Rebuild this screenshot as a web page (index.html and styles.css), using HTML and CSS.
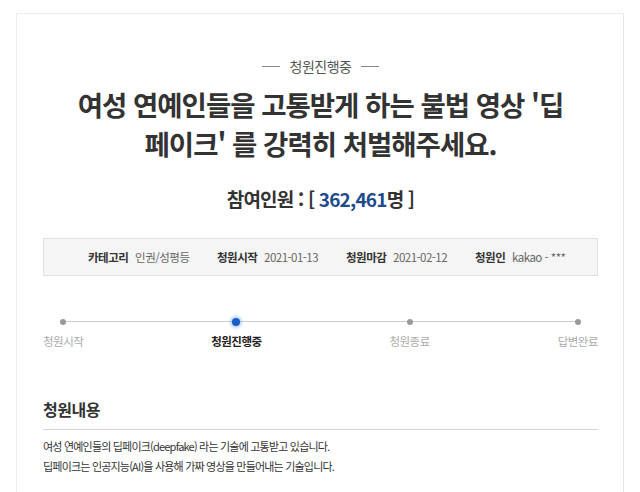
FILE: index.html
```html
<!DOCTYPE html>
<html lang="ko">
<head>
    <meta charset="UTF-8">
    <title>청원진행중</title>
    <link rel="stylesheet" href="styles.css">
</head>
<body>

<div class="petition">
    <div class="status"><span class="dash"></span>청원진행중<span class="dash"></span></div>
    <h1>여성 연예인들을 고통받게 하는 불법 영상 '딥<br>페이크' 를 강력히 처벌해주세요.</h1>
    <p class="count">참여인원 : [ <span class="num">362,461</span>명 ]</p>

    <ul class="info">
        <li><b>카테고리</b> 인권/성평등</li>
        <li><b>청원시작</b> 2021-01-13</li>
        <li><b>청원마감</b> 2021-02-12</li>
        <li><b>청원인</b> kakao - ***</li>
    </ul>

    <div class="progress">
        <div class="track"></div>
        <div class="step"><span class="dot"></span>청원시작</div>
        <div class="step on"><span class="dot"></span>청원진행중</div>
        <div class="step"><span class="dot"></span>청원종료</div>
        <div class="step"><span class="dot"></span>답변완료</div>
    </div>

    <h2>청원내용</h2>
    <div class="content">
        <p>여성 연예인들의 딥페이크(deepfake) 라는 기술에 고통받고 있습니다.</p>
        <p>딥페이크는 인공지능(AI)을 사용해 가짜 영상을 만들어내는 기술입니다.</p>
    </div>
</div>

</body>
</html>
```

FILE: styles.css
```css
body {
    margin: 0;
    background: #fff;
    font-family: "Noto Sans CJK KR", "Noto Sans", sans-serif;
    color: #333;
}

.petition {
    margin: 13px 0 0 16px;
    width: 555px;
    height: 600px;
    padding: 38px 25px 0 26px;
    border: 1px solid #eee;
    border-right-color: #e6e6e6;
}

.status {
    display: flex;
    justify-content: center;
    align-items: center;
    gap: 10px;
    font-size: 14px;
    color: #555;
    height: 28px;
    letter-spacing: -0.5px;
}

.dash {
    width: 18px;
    border-top: 1px solid #888;
}

h1 {
    margin: 5px 0 0;
    text-align: center;
    font-size: 27.5px;
    line-height: 39px;
    font-weight: bold;
    letter-spacing: -1px;
    color: #333;
}

.count {
    margin: 22px 0 0;
    text-align: center;
    font-size: 19px;
    font-weight: bold;
    letter-spacing: -0.8px;
}

.num {
    color: #1d4b8c;
}

.info {
    list-style: none;
    margin: 26px 0 0;
    padding: 0 0 0 44px;
    height: 36px;
    display: grid;
    grid-template-columns: repeat(4, 129px);
    align-items: center;
    background: #f5f5f5;
    border: 1px solid #e0e0e0;
    font-size: 11.5px;
    color: #666;
    letter-spacing: -0.5px;
}

.info b {
    color: #333;
    margin-right: 4px;
}

.progress {
    position: relative;
    display: flex;
    justify-content: space-between;
    margin-top: 41px;
}

.track {
    position: absolute;
    left: 17px;
    right: 18px;
    top: 4px;
    border-top: 1px solid #ccc;
}

.step {
    position: relative;
    display: flex;
    flex-direction: column;
    align-items: center;
    white-space: nowrap;
    font-size: 11.5px;
    color: #aaa;
    letter-spacing: -0.5px;
}

.dot {
    width: 6px;
    height: 6px;
    margin: 2px 0 8px;
    border-radius: 50%;
    background: #999;
}

.step.on {
    color: #222;
    font-weight: bold;
}

.step.on .dot {
    width: 8px;
    height: 8px;
    margin: 1px 0 7px;
    background: #1a5dc9;
    box-shadow: 0 0 3px 2px rgba(60, 130, 230, 0.35);
}

h2 {
    margin: 49px 0 0;
    font-size: 16px;
    line-height: 22px;
    font-weight: bold;
    padding-bottom: 9px;
    border-bottom: 1px solid #d5d5d5;
    letter-spacing: -0.5px;
}

.content {
    padding-top: 6px;
    font-size: 11px;
    letter-spacing: -0.8px;
}

.content p {
    margin: 0;
    line-height: 20px;
}
```
